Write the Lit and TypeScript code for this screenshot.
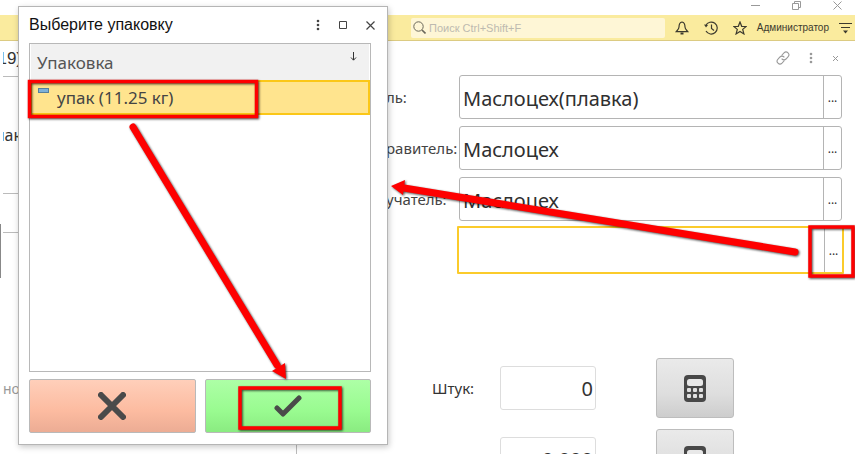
import { LitElement, html, css, svg } from "lit";
import { customElement } from "lit/decorators.js";

const calculator = html`<svg class="calc" viewBox="0 0 22 27" width="22" height="27" aria-hidden="true">
  <rect width="22" height="27" rx="4" fill="#484848"></rect>
  <rect x="3" y="4" width="16" height="7" rx="2.5" fill="#e8e8e8"></rect>
  ${[3, 9, 15].map((x) => [13, 19].map((y) => svg`<rect x=${x} y=${y} width="4" height="4" rx="1" fill="#e0e0e0"></rect>`))}
</svg>`;

const dots = html`<svg viewBox="0 0 4 12" width="4" height="12" fill="currentColor" aria-hidden="true">
  <circle cx="2" cy="2" r="1.3"></circle><circle cx="2" cy="6" r="1.3"></circle><circle cx="2" cy="10" r="1.3"></circle>
</svg>`;

const reset = css`
  :host, * { box-sizing: border-box; }
  button { margin: 0; padding: 0; border: 0; background: none; color: inherit; font: inherit; display: flex; align-items: center; justify-content: center; }
  input { margin: 0; padding: 0; border: 0; outline: 0; background: none; color: inherit; font: inherit; min-width: 0; }
  svg { display: block; flex: none; }
`;

@customElement("top-bar")
class TopBar extends LitElement {
  static styles = [reset, css`
    :host { display: block; font-family: "Liberation Sans", Arial, sans-serif; color: #3c3a2e; }
    .window { height: 15px; display: flex; justify-content: flex-end; align-items: flex-start; gap: 32px; padding-right: 13px; color: #999; }
    .window button { height: 10px; width: 9px; }
    .bar { height: 26px; display: flex; align-items: center; background: #faeb9e; border-bottom: 1px solid #dccb82; padding: 0 3px 0 411px; }
    .search { flex: 1; height: 20px; display: flex; align-items: center; gap: 3px; background: #fef6d6; border-radius: 2px; padding-left: 2px; margin-right: 10px; }
    .search input { flex: 1; font-size: 11px; }
    .search input::placeholder { color: #bdbab0; opacity: 1; }
    .tools { display: flex; align-items: center; gap: 15px; }
    .tools button { width: 14px; height: 16px; }
    .user { font-size: 10px; margin: 0 10px; white-space: nowrap; }
  `];
  render() {
    return html`
      <div class="window">
        <button aria-label="Свернуть"><svg width="9" height="9"><path d="M0 4.5h9" stroke="currentColor"/></svg></button>
        <button aria-label="Развернуть"><svg width="9" height="9" fill="none" stroke="currentColor"><path d="M.5 2.500h6v6h-6zM2.500 2.500v-2h6v6h-2"/></svg></button>
        <button aria-label="Закрыть окно"><svg width="9" height="9"><path d="M.5.5l8 8m0-8l-8 8" stroke="currentColor"/></svg></button>
      </div>
      <div class="bar">
        <label class="search">
          <svg width="13" height="13" fill="none" stroke="#6a675a"><circle cx="5.500" cy="5.500" r="4.700"/><path d="M9 9l3.500 3.500" stroke-width="1.600"/></svg>
          <input type="search" placeholder="Поиск Ctrl+Shift+F" aria-label="Поиск">
        </label>
        <div class="tools">
          <button aria-label="Уведомления"><svg width="14" height="14" fill="none" stroke="currentColor" stroke-width="1.200"><path d="M7 1c-2.600.5-3 2.600-3 5C4 8 2.500 9 1.200 10.700h11.600C11.500 9 10 8 10 6c0-2.400-.4-4.500-3-5z"/><path d="M5.500 12.500h3" stroke-width="2"/></svg></button>
          <button aria-label="История"><svg width="14" height="14" fill="none" stroke="currentColor" stroke-width="1.200"><path d="M1.800 4.500A6 6 0 1 1 2 10M7.500 3.500V7.500L10 9.500"/><path d="M0 3.500l4 .5-2 2.500z" fill="currentColor" stroke="none"/></svg></button>
          <button aria-label="Избранное"><svg width="14" height="14" fill="none" stroke="currentColor" stroke-width="1.200"><path d="M7 1l1.700 4.300 4.500.2-3.500 2.900 1.200 4.500L7 10.400l-3.900 2.500 1.200-4.500L.8 5.500l4.500-.2z"/></svg></button>
        </div>
        <span class="user">Администратор</span>
        <button aria-label="Меню"><svg width="13" height="12" stroke="currentColor" stroke-width="1.200"><path d="M0 1.500h13M2 5.500h9"/><path d="M4 8.500h5l-2.500 3z" fill="currentColor" stroke="none"/></svg></button>
      </div>`;
  }
}

@customElement("transfer-form")
class TransferForm extends LitElement {
  static styles = [reset, css`
    :host { display: flex; flex: 1; min-height: 0; overflow: hidden; font-family: "Noto Sans", sans-serif; color: #333; }
    .side { width: 297px; flex: none; display: flex; flex-direction: column; padding-left: 3px; white-space: nowrap; font-size: 16px; }
    .side div { flex: none; display: flex; align-items: center; border-bottom: 1px solid #bbb; }
    .side .clip { overflow: hidden; width: 19px; justify-content: flex-end; }
    .side .number { height: 36px; font-family: "Liberation Sans", Arial, sans-serif; font-size: 17px; }
    .side .pack { height: 117px; }
    .side .blank { height: 39px; }
    .side .note { height: 205px; padding-top: 106px; border-bottom: 0; color: #999; font-size: 14px; }
    .side .rest { flex: 1; border-bottom: 0; border-right: 1px solid #bbb; }
    .main { flex: 1; min-width: 0; display: flex; flex-direction: column; padding-right: 13px; }
    .tools { height: 34px; flex: none; display: flex; align-items: center; justify-content: flex-end; gap: 19px; padding-right: 3px; color: #999; }
    .rows { display: grid; gap: 7px; padding-left: 89px; }
    .row { display: grid; grid-template-columns: 73px 1fr; align-items: center; font-size: 15px; }
    .row label { white-space: nowrap; color: #444; }
    .field { height: 44px; min-width: 0; display: flex; border: 1px solid #b4b4b4; border-radius: 3px; font-size: 20px; color: #303030; }
    .field input { flex: 1; padding: 2px 0 0 3px; }
    .field button { width: 18px; border-left: 1px solid #b4b4b4; font-size: 12px; }
    .field.active { border: 2px solid #fbcb2b; border-radius: 1px; height: 48px; margin: -2px; }
    .quantities { display: grid; grid-template-columns: 68px 96px 60px 78px; row-gap: 11px; align-items: center; padding: 86px 0 0 135px; font-size: 15px; }
    .amount { height: 44px; border: 1px solid #ddd; border-radius: 3px; text-align: right; font-size: 20px; padding-right: 2px; }
    .pick { grid-column: 4; height: 60px; border: 1px solid #bdbdbd; border-radius: 3px; background: linear-gradient(#eaeaea, #dedede 60%, #cdcdcd); }
    .weight { grid-column: 2; }
  `];
  field(id: string, label: string, value: string, active = false) {
    return html`<div class="row">
      <label for=${id}>${label}</label>
      <div class="field ${active ? "active" : ""}">
        <input id=${id} .value=${value} aria-label=${label || "Упаковка"}>
        <button aria-label="Выбрать">...</button>
      </div>
    </div>`;
  }
  render() {
    return html`
      <div class="side">
        <div class="clip number">19)</div>
        <div class="clip pack">пак</div>
        <div class="blank"></div>
        <div class="note">но</div>
        <div class="rest"></div>
      </div>
      <div class="main">
        <div class="tools">
          <button aria-label="Ссылка"><svg width="14" height="14" viewBox="0 0 14 14" fill="none" stroke="currentColor" stroke-width="1.100" stroke-linecap="round"><path d="M6 4l2-2.200a2.800 2.800 0 0 1 4 4L10 8a2.800 2.800 0 0 1-4 0M8 10l-2 2.200a2.800 2.800 0 0 1-4-4L4 6a2.800 2.800 0 0 1 4 0"/></svg></button>
          <button aria-label="Ещё">${dots}</button>
          <button aria-label="Закрыть"><svg width="7" height="7"><path d="M1 1l5 5m0-5l-5 5" stroke="currentColor"/></svg></button>
        </div>
        <div class="rows">
          ${this.field("from", "ль:", "Маслоцех(плавка)")}
          ${this.field("sender", "равитель:", "Маслоцех")}
          ${this.field("receiver", "учатель:", "Маслоцех")}
          ${this.field("pack", "", "", true)}
        </div>
        <div class="quantities">
          <label for="pieces">Штук:</label>
          <input id="pieces" class="amount" value="0">
          <button class="pick" aria-label="Калькулятор">${calculator}</button>
          <input class="amount weight" value="0.000" aria-label="Вес">
          <button class="pick" aria-label="Калькулятор веса">${calculator}</button>
        </div>
      </div>`;
  }
}

@customElement("pack-dialog")
class PackDialog extends LitElement {
  static styles = [reset, css`
    :host { display: flex; flex-direction: column; background: #fff; border: 1px solid #b5b5b5; box-shadow: 1px 2px 6px rgba(0, 0, 0, 0.22); padding: 0 16px 11px 10px; font-family: "Noto Sans", sans-serif; }
    header { height: 36px; flex: none; display: flex; align-items: center; font-family: "Liberation Sans", Arial, sans-serif; color: #444; }
    h1 { margin: 0; flex: 1; font-size: 16px; font-weight: 400; color: #111; }
    .controls { display: flex; align-items: center; gap: 19px; margin-right: -4px; }
    .list { flex: 1; border: 1px solid #b8b8b8; }
    table { width: 100%; border-collapse: collapse; }
    th { height: 37px; padding: 0 12px 0 6px; background: #f1f1f1; color: #555; font-size: 17px; font-weight: 400; text-align: left; }
    .sort { display: flex; justify-content: space-between; align-items: center; }
    .sort svg { margin-bottom: 12px; }
    td { height: 33px; padding: 0 6px; background: #ffe48e; border: 2px solid #fbc717; color: #444; font-size: 17px; line-height: 24px; }
    .item { display: flex; align-items: center; gap: 8px; }
    .item i { width: 11px; height: 5px; margin-bottom: 14px; background: #7db1d8; border: 1px solid #557f9c; }
    footer { display: grid; grid-template-columns: 1fr 1fr; gap: 9px; margin-top: 7px; }
    footer button { height: 54px; border: 1px solid #b9b9b9; border-radius: 2px; }
    .cancel { background: linear-gradient(#ffcfba, #fcbba0 60%, #ecac94); }
    .ok { background: linear-gradient(#adffa6, #99fb90 60%, #8aeb81); }
  `];
  render() {
    return html`
      <header>
        <h1>Выберите упаковку</h1>
        <div class="controls">
          <button aria-label="Ещё">${dots}</button>
          <button aria-label="Развернуть"><svg width="8" height="8"><path d="M.5.5h7v7h-7z" fill="none" stroke="currentColor"/></svg></button>
          <button aria-label="Закрыть"><svg width="9" height="9"><path d="M.5.5l8 8m0-8l-8 8" stroke="currentColor" stroke-width="1.200"/></svg></button>
        </div>
      </header>
      <div class="list">
        <table>
          <thead><tr><th><div class="sort">Упаковка<svg width="7" height="9"><path d="M3.500 0v8M1 5.500l2.500 2.700L6 5.500" fill="none" stroke="#333"/></svg></div></th></tr></thead>
          <tbody><tr><td><div class="item"><i></i>упак (11.25 кг)</div></td></tr></tbody>
        </table>
      </div>
      <footer>
        <button class="cancel" aria-label="Отмена"><svg width="28" height="28"><path d="M3 3l22 22m0-22L3 25" stroke="#4a4a4a" stroke-width="6" stroke-linecap="round"/></svg></button>
        <button class="ok" aria-label="Выбрать"><svg width="28" height="22"><path d="M3 13l6 6L25 3" fill="none" stroke="#4a4a4a" stroke-width="5" stroke-linecap="round" stroke-linejoin="round"/></svg></button>
      </footer>`;
  }
}

@customElement("app-root")
class AppRoot extends LitElement {
  static styles = css`
    :host { position: relative; display: flex; flex-direction: column; height: 100vh; overflow: hidden; background: #fff; }
    top-bar { flex: none; }
    pack-dialog { position: absolute; left: 18px; top: 6px; width: 370px; height: 439px; }
    .marks { position: absolute; left: 0; top: 0; pointer-events: none; filter: drop-shadow(1px 1px 1px rgba(0, 0, 0, 0.7)); }
    .edge { position: absolute; left: 0; top: 224px; width: 1px; height: 54px; background: #888; }
  `;
  render() {
    return html`
      <top-bar></top-bar>
      <transfer-form></transfer-form>
      <div class="edge"></div>
      <pack-dialog></pack-dialog>
      <svg class="marks" width="855" height="454" fill="none" stroke="#fe0000" aria-hidden="true">
        <g stroke-width="3.500">
          <rect x="29.500" y="81.500" width="227" height="35"/>
          <rect x="240" y="388" width="100" height="40"/>
          <rect x="810" y="227" width="43" height="49"/>
        </g>
        <g stroke-width="7" stroke-linecap="round"><path d="M133 127L277 365M795 252L404 188"/></g>
        <g fill="#fe0000" stroke="none"><path d="M286 379l-14-8 13-8zM391 186l14-6-2 15z"/></g>
      </svg>`;
  }
}
